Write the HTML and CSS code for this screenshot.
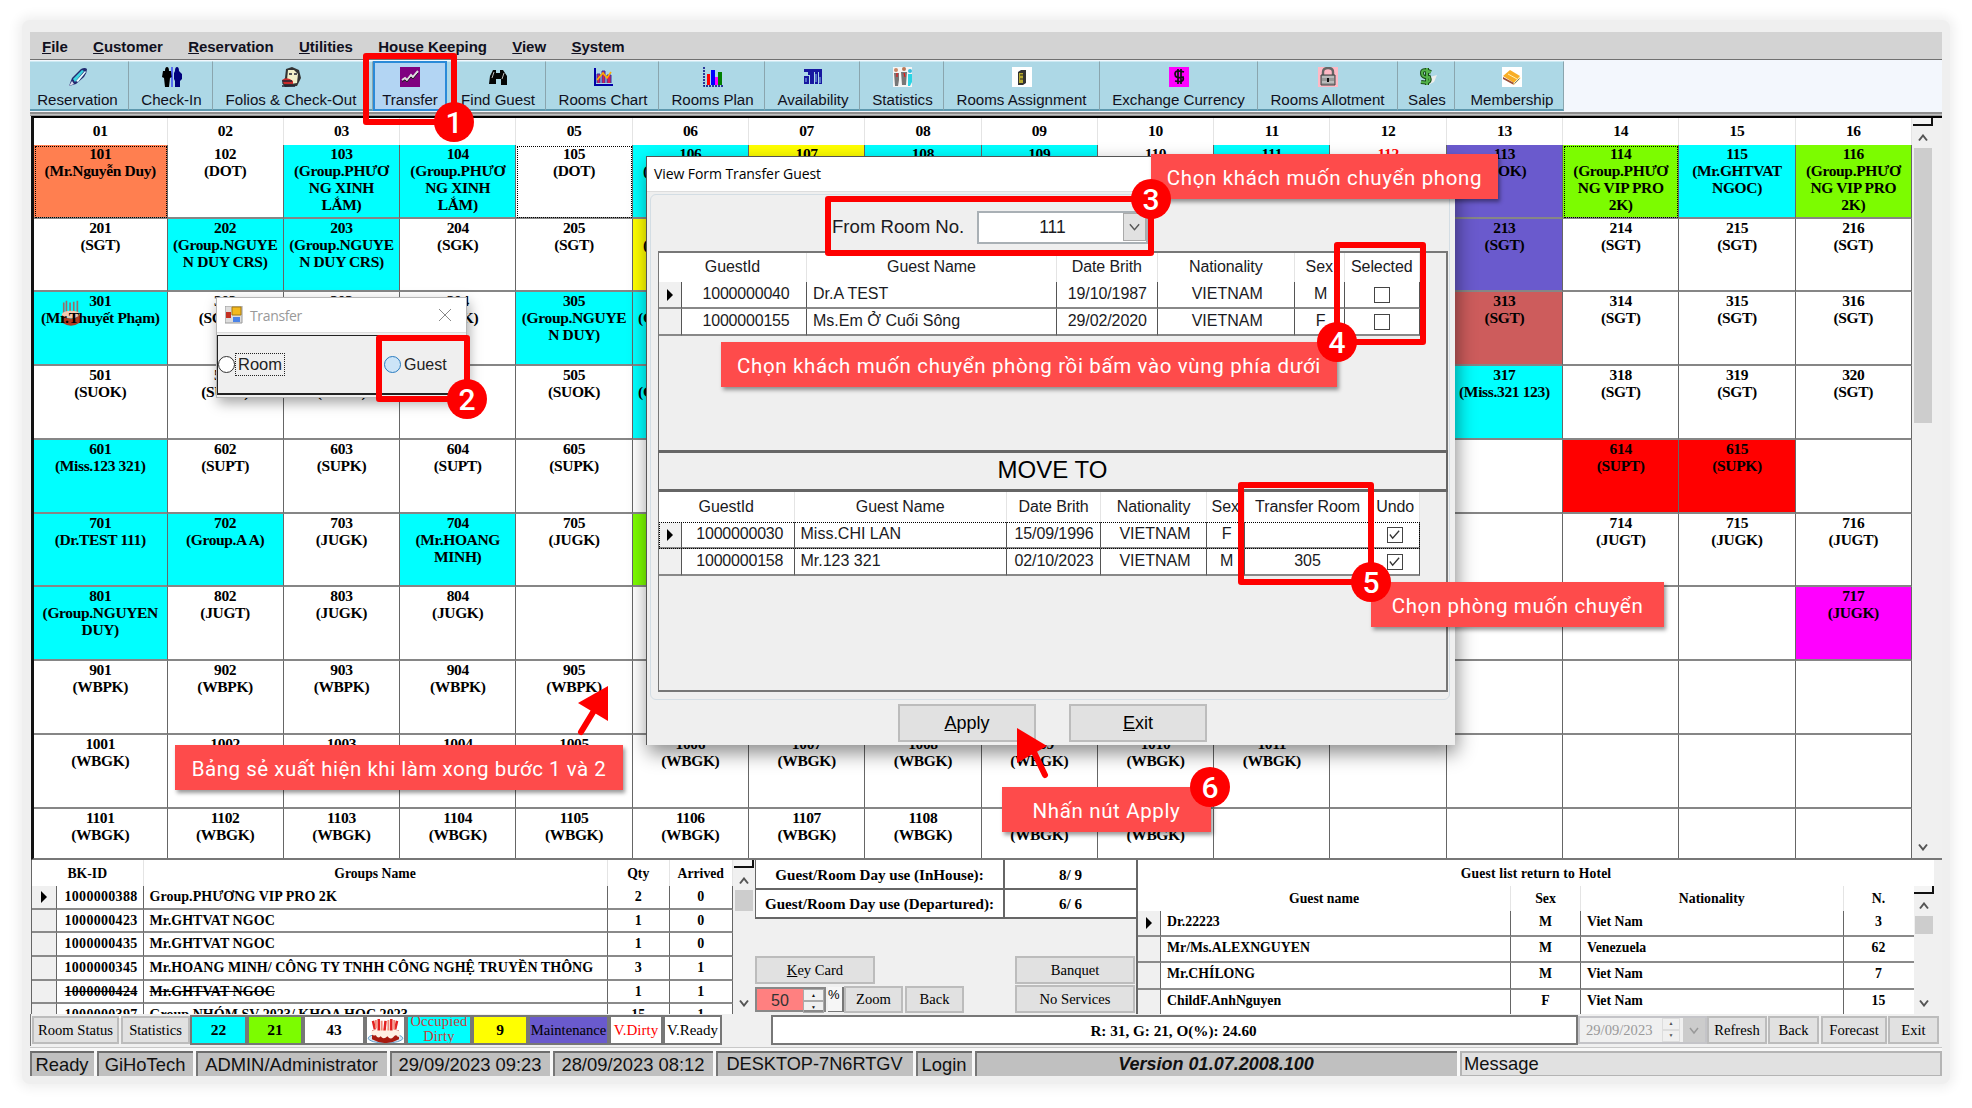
FILE: index.html
```html
<!DOCTYPE html>
<html lang="vi">
<head>
<meta charset="utf-8">
<title>Hotel front desk - Transfer guest</title>
<link rel="stylesheet" href="styles.css">
</head>
<body>
<div class="frame">
<div class="app">
  <nav class="menu"><span><u>F</u>ile</span><span><u>C</u>ustomer</span><span><u>R</u>eservation</span><span><u>U</u>tilities</span><span>House Keeping</span><span><u>V</u>iew</span><span><u>S</u>ystem</span></nav>
  <div class="toolstrip">
    <div class="tool w-res"><svg viewBox="0 0 20 20"><path d="M1 19 4 11 13 2q4-2 6 0 0 4-3 8L8 17Z" fill="#222a70"/><path d="M5 12 14 3l2 1-9 11Z" fill="#3ed3e0"/><path d="M8 14 17 4l1 1-8 10Z" fill="#e8ffff"/><path d="m1 19 3-5 2 3Z" fill="#dde"/></svg><span>Reservation</span></div>
    <div class="tool w-chk"><svg viewBox="0 0 20 20"><path d="M3 4q0-4 2-4t2 4h2l1 6-2 1-1 9H3l-1-9-2-1 1-6Z" fill="#000"/><path d="M10 0v20" stroke="#00f"/><path d="M13 4q0-4 2-4t2 4l3 3v5l-2 2v6h-5v-6l-1-2V6Z" fill="#00007c"/></svg><span>Check-In</span></div>
    <div class="tool w-fol"><svg viewBox="0 0 20 20"><path d="m5 2 6-2 7 3 2 8-4 8-12 1-3-4 3-5Z" fill="#333"/><path d="M7 3h6l4 4-1 9-6 1-4-4Z" fill="#f2efc8"/><path d="M1 13q5-4 11 1v3H3Z" fill="#c82a2a"/><path d="M1 14h10M8 7h3m2 0h3M1 19h13" stroke="#223" stroke-width="1.3"/></svg><span>Folios &amp; Check-Out</span></div>
    <div class="tool w-tra active"><svg viewBox="0 0 20 20"><path d="M0 0h20v20H0Z" fill="#800080"/><path d="m2 13 3-2 2 2 4-5 2 2 5-6" fill="none" stroke="#ddd" stroke-width="2"/><path d="m2 15 3-2 2 2 4-5 2 2 5-6" fill="none" stroke="#222"/></svg><span>Transfer</span></div>
    <div class="tool w-fin"><svg viewBox="0 0 20 20"><path d="M2 9 5 3h3v3h4V3h3l4 6v9h-6v-6H8v5H1Z" fill="#050505"/><path d="m4 11 2-6m8 7 2-6" stroke="#bbb"/></svg><span>Find Guest</span></div>
    <div class="tool w-cha"><svg viewBox="0 0 20 20"><path d="M2 1v17h18" fill="none" stroke="#0000a8" stroke-width="2"/><path d="M4 16V7h3v9m2 0V4h3v12m2 0V8h4v8" fill="#d51e55" stroke="#3333a5"/><path d="m4 13 6-7 4 5 4-6" fill="none" stroke="#ffb000" stroke-width="1.6"/></svg><span>Rooms Chart</span></div>
    <div class="tool w-pla"><svg viewBox="0 0 20 20"><path d="M1 0v19h19" fill="none" stroke="#000080" stroke-width="1.5" stroke-dasharray="2 1"/><path d="M4 7h3v11H4Z" fill="red"/><path d="M8 3h4v15H8Z" fill="#00f"/><path d="M12 10h3v8h-3Z" fill="#f0f"/><path d="M15 5h4v13h-4Z" fill="green"/></svg><span>Rooms Plan</span></div>
    <div class="tool w-ava"><svg viewBox="0 0 20 20"><path d="M1 2h18v3H1ZM1 9h5v8H1ZM7 5h4v12H7ZM12 5h3v12h-3ZM16 5h3v12h-3ZM5 4h3v4H5Z" fill="#1717a0"/><path d="M3 11v4m10-8v8m4-5v6" stroke="#8fc0f0"/></svg><span>Availability</span></div>
    <div class="tool w-sta"><svg viewBox="0 0 20 20"><path d="M0 0h19v20H0Z" fill="#f5f5f5"/><circle cx="3" cy="3" r="2" fill="#c86"/><circle cx="11" cy="2" r="2" fill="#b75"/><circle cx="17" cy="4" r="2" fill="#3bd"/><path d="M1 6h5v7l-1 6H2ZM8 5h6l-1 13H9Z" fill="#777"/><path d="M15 7h4v8l-2 4h-2Z" fill="#29d5e5"/><path d="m11 6 1 4M4 6v4" stroke="red"/></svg><span>Statistics</span></div>
    <div class="tool w-ass"><svg viewBox="0 0 20 20"><path d="M0 0h20v20H0Z" fill="#fff"/><path d="m6 5 3-2h5v13l-3 2H6Z" fill="#333"/><path d="M7 6h4v10H7Z" fill="#b7aa30"/><path d="M8 8h3m-3 4h3" stroke="#222"/></svg><span>Rooms Assignment</span></div>
    <div class="tool w-exc"><svg viewBox="0 0 20 20"><path d="M0 0h20v20H0Z" fill="#f0f"/><path d="M15 5Q6 2 6 7t8 3q2 6-8 4M9 2v15m3-15v15" fill="none" stroke="#111" stroke-width="1.7"/></svg><span>Exchange Currency</span></div>
    <div class="tool w-all"><svg viewBox="0 0 20 20"><path d="M0 0h20v20H0Z" fill="#ffb9c5"/><path d="M5 9V5q0-4 5-4t5 4v4" fill="none" stroke="#666" stroke-width="2.4"/><path d="M3 8h14v10H3Z" fill="#999" stroke="#444"/><path d="M4 10h12M4 15h12" stroke="#ddd"/><path d="M10 11v4" stroke="#111" stroke-width="2"/></svg><span>Rooms Allotment</span></div>
    <div class="tool w-sal"><svg viewBox="0 0 20 20"><path d="m13 10 7-2-3 7-6 3Z" fill="#eee"/><path d="M14 5Q5 1 5 6t7 4q3 7-8 5M10 1v17" fill="none" stroke="#184d18" stroke-width="4"/><path d="M14 5Q5 1 5 6t7 4q3 7-8 5M10 1v17" fill="none" stroke="#54b24a" stroke-width="2"/></svg><span>Sales</span></div>
    <div class="tool w-mem"><svg viewBox="0 0 20 20"><path d="M0 0h20v20H0Z" fill="#fff"/><path d="m1 9 7-6 10 6-6 7Z" fill="#f8ae27"/><path d="m1 10 11 6v2L1 12Z" fill="#994b34"/><path d="m12 16 6-6v2l-6 6ZM6 7l9 5" fill="#778" stroke="#fff2b3"/></svg><span>Membership</span></div>
  </div>
  <div class="split"></div>

  <section class="rooms">
    <div class="room-grid">
      <b>01</b><b>02</b><b>03</b><b>04</b><b>05</b><b>06</b><b>07</b><b>08</b><b>09</b><b>10</b><b>11</b><b>12</b><b>13</b><b>14</b><b>15</b><b>16</b>

      <div class="coral dot">101<br>(Mr.Nguyễn Duy)</div><div>102<br>(DOT)</div><div class="cyan">103<br>(Group.PHƯƠ<br>NG XINH<br>LẮM)</div><div class="cyan">104<br>(Group.PHƯƠ<br>NG XINH<br>LẮM)</div><div class="dot">105<br>(DOT)</div><div class="cyan">106<br>(Group.PHƯƠ</div><div class="yellow">107</div><div class="cyan">108</div><div class="cyan">109</div><div>110</div><div class="cyan">111</div><div class="redtext">112</div><div class="slate">113<br>(DOK)</div><div class="green dot">114<br>(Group.PHƯƠ<br>NG VIP PRO<br>2K)</div><div class="cyan">115<br>(Mr.GHTVAT<br>NGOC)</div><div class="green">116<br>(Group.PHƯƠ<br>NG VIP PRO<br>2K)</div>

      <div>201<br>(SGT)</div><div class="cyan">202<br>(Group.NGUYE<br>N DUY CRS)</div><div class="cyan">203<br>(Group.NGUYE<br>N DUY CRS)</div><div>204<br>(SGK)</div><div>205<br>(SGT)</div><div class="yellow">206<br>(Group.NGUY</div><div></div><div></div><div></div><div></div><div></div><div></div><div class="slate">213<br>(SGT)</div><div>214<br>(SGT)</div><div>215<br>(SGT)</div><div>216<br>(SGT)</div>

      <div class="cyan birthday"><svg viewBox="0 0 22 30"><path d="M3 3v12M6 1v13M10 3v11M14 2v13M18 1v13" stroke="#9a6a68" stroke-width="1.8"/><ellipse cx="11" cy="16" rx="10" ry="4" fill="#f2c8b0"/><path d="M1 17q10 7 20 0v8q-10 7-20 0Z" fill="#b03a20"/></svg>301<br>(Mr.Thuyết Phạm)</div><div>302<br>(SGOK)</div><div>303<br>(SGT)</div><div>304<br>(SGK)</div><div class="cyan">305<br>(Group.NGUYE<br>N DUY)</div><div class="cyan">306<br>(Group.NGUYE</div><div></div><div></div><div></div><div></div><div></div><div></div><div class="indian">313<br>(SGT)</div><div>314<br>(SGT)</div><div>315<br>(SGT)</div><div>316<br>(SGT)</div>

      <div>501<br>(SUOK)</div><div>502<br>(SUPT)</div><div>503<br>(SUPK)</div><div>504</div><div>505<br>(SUOK)</div><div class="cyan">506<br>(Group.NGUYE</div><div></div><div></div><div></div><div></div><div></div><div></div><div class="cyan">317<br>(Miss.321 123)</div><div>318<br>(SGT)</div><div>319<br>(SGT)</div><div>320<br>(SGT)</div>

      <div class="cyan">601<br>(Miss.123 321)</div><div>602<br>(SUPT)</div><div>603<br>(SUPK)</div><div>604<br>(SUPT)</div><div>605<br>(SUPK)</div><div></div><div></div><div></div><div></div><div></div><div></div><div></div><div></div><div class="red">614<br>(SUPT)</div><div class="red">615<br>(SUPK)</div><div></div>

      <div class="cyan">701<br>(Dr.TEST 111)</div><div class="cyan">702<br>(Group.A A)</div><div>703<br>(JUGK)</div><div class="cyan">704<br>(Mr.HOANG<br>MINH)</div><div>705<br>(JUGK)</div><div class="green"></div><div></div><div></div><div></div><div></div><div></div><div></div><div></div><div>714<br>(JUGT)</div><div>715<br>(JUGK)</div><div>716<br>(JUGT)</div>

      <div class="cyan">801<br>(Group.NGUYEN<br>DUY)</div><div>802<br>(JUGT)</div><div>803<br>(JUGK)</div><div>804<br>(JUGK)</div><div></div><div></div><div></div><div></div><div></div><div></div><div></div><div></div><div></div><div></div><div></div><div class="magenta">717<br>(JUGK)</div>

      <div>901<br>(WBPK)</div><div>902<br>(WBPK)</div><div>903<br>(WBPK)</div><div>904<br>(WBPK)</div><div>905<br>(WBPK)</div><div></div><div></div><div></div><div></div><div></div><div></div><div></div><div></div><div></div><div></div><div></div>

      <div>1001<br>(WBGK)</div><div>1002</div><div>1003</div><div>1004</div><div>1005</div><div>1006<br>(WBGK)</div><div>1007<br>(WBGK)</div><div>1008<br>(WBGK)</div><div>1009<br>(WBGK)</div><div>1010<br>(WBGK)</div><div>1011<br>(WBGK)</div><div></div><div></div><div></div><div></div><div></div>

      <div>1101<br>(WBGK)</div><div>1102<br>(WBGK)</div><div>1103<br>(WBGK)</div><div>1104<br>(WBGK)</div><div>1105<br>(WBGK)</div><div>1106<br>(WBGK)</div><div>1107<br>(WBGK)</div><div>1108<br>(WBGK)</div><div>1109<br>(WBGK)</div><div>1110<br>(WBGK)</div><div></div><div></div><div></div><div></div><div></div><div></div>
    </div>
    <div class="scroll main-scroll"><i class="corner"></i><svg viewBox="0 0 10 7"><path d="M1 6 5 1l4 5"/></svg><i class="thumb"></i><svg class="end" viewBox="0 0 10 7"><path d="M1 1l4 5 4-5"/></svg></div>
  </section>

  <section class="lower">
    <div class="groups">
      <div class="grow ghead"><span class="two">BK-ID</span><span>Groups Name</span><span>Qty</span><span>Arrived</span></div>
      <div class="grow"><span class="rh"><i class="ptr"></i></span><span>1000000388</span><span>Group.PHƯƠNG VIP PRO 2K</span><span>2</span><span>0</span></div>
      <div class="grow"><span class="rh"></span><span>1000000423</span><span>Mr.GHTVAT NGOC</span><span>1</span><span>0</span></div>
      <div class="grow"><span class="rh"></span><span>1000000435</span><span>Mr.GHTVAT NGOC</span><span>1</span><span>0</span></div>
      <div class="grow"><span class="rh"></span><span>1000000345</span><span>Mr.HOANG MINH/ CÔNG TY TNHH CÔNG NGHỆ TRUYỀN THÔNG</span><span>3</span><span>1</span></div>
      <div class="grow"><span class="rh"></span><span><s>1000000424</s></span><span><s>Mr.GHTVAT NGOC</s></span><span>1</span><span>1</span></div>
      <div class="grow"><span class="rh"></span><span>1000000397</span><span>Group.NHÓM SV 2023/ KHOA HOC 2023</span><span>15</span><span>1</span></div>
    </div>
    <div class="scroll group-scroll"><i class="corner"></i><svg viewBox="0 0 10 7"><path d="M1 6 5 1l4 5"/></svg><i class="thumb"></i><svg class="end" viewBox="0 0 10 7"><path d="M1 1l4 5 4-5"/></svg></div>
    <div class="middle">
      <div class="dayuse"><b>Guest/Room Day use (InHouse):</b><b>8/ 9</b><b>Guest/Room Day use (Departured):</b><b>6/ 6</b></div>
      <div class="mid-row"><button class="wide"><u>K</u>ey Card</button><button class="wide push">Banquet</button></div>
      <div class="mid-row second"><div class="spin"><span>50</span><i><em>▲</em><em>▼</em></i></div><div class="pct">%</div><button class="small">Zoom</button><button class="small back">Back</button><button class="wide push">No Services</button></div>
    </div>
    <div class="returns">
      <div class="rtitle">Guest list return to Hotel</div>
      <div class="rbody">
        <div class="rtable">
          <div class="rrow rhead"><span class="two">Guest name</span><span>Sex</span><span>Nationality</span><span>N.</span></div>
          <div class="rrow"><span class="rh"><i class="ptr"></i></span><span>Dr.22223</span><span>M</span><span>Viet Nam</span><span>3</span></div>
          <div class="rrow"><span class="rh"></span><span>Mr/Ms.ALEXNGUYEN</span><span>M</span><span>Venezuela</span><span>62</span></div>
          <div class="rrow"><span class="rh"></span><span>Mr.CHÍLONG</span><span>M</span><span>Viet Nam</span><span>7</span></div>
          <div class="rrow"><span class="rh"></span><span>ChildF.AnhNguyen</span><span>F</span><span>Viet Nam</span><span>15</span></div>
        </div>
        <div class="scroll ret-scroll"><i class="corner"></i><svg viewBox="0 0 10 7"><path d="M1 6 5 1l4 5"/></svg><i class="thumb"></i><svg class="end" viewBox="0 0 10 7"><path d="M1 1l4 5 4-5"/></svg></div>
      </div>
    </div>
  </section>

  <section class="legend">
    <button class="b-status">Room Status</button><button class="b-stat">Statistics</button>
    <div class="key cyan k22">22</div><div class="key green k21">21</div><div class="key k43">43</div>
    <div class="key cake"><svg viewBox="0 0 38 28"><ellipse cx="19" cy="22" rx="18" ry="5" fill="#d8e8f5" stroke="#5e9bc8"/><path d="M5 14h28v9q-14 8-28 0Z" fill="#a81a10"/><path d="M4 15q15-7 30 0 1 4-2 6-2-4-5 0-3 3-6-1-4 4-7 0-3 3-5-1-5 1-5-4Z" fill="#fff0e4"/><path d="M6 4l2 9M12 2v12M19 4l-1 10M25 2v12M31 4l-2 9" stroke="#e32020" stroke-width="2.6"/><path d="M9 3v9M15 4v10M22 3v11M28 3v10" stroke="#f08a78" stroke-width="2"/></svg></div>
    <div class="key cyan occ">Occupied<br>Dirty</div><div class="key yellow k9">9</div><div class="key slate mnt">Maintenance</div><div class="key vd">V.Dirty</div><div class="key vr">V.Ready</div>
    <div class="summary">R: 31, G: 21, O(%): 24.60</div>
    <div class="date"><span>29/09/2023</span><i><em>▲</em><em>▼</em></i><svg viewBox="0 0 20 24"><path d="m6 10 4 5 4-5"/></svg></div>
    <button class="b-ref">Refresh</button><button class="b-back">Back</button><button class="b-for">Forecast</button><button class="b-exit">Exit</button>
  </section>

  <footer class="status"><span class="s1">Ready</span><span class="s2">GiHoTech</span><span class="s3">ADMIN/Administrator</span><span class="s4">29/09/2023 09:23</span><span class="s5">28/09/2023 08:12</span><span class="s6">DESKTOP-7N6RTGV</span><span class="s7">Login</span><span class="s8">Version 01.07.2008.100</span><span class="s9">Message</span></footer>
</div>
</div>

<div class="dialog pick">
  <div class="pick-title"><svg viewBox="0 0 18 18"><path d="M0 0h17v17H0Z" fill="#ddd" stroke="#999"/><path d="M1 6h5v6H1Z" fill="#c43022"/><path d="M7 1h9v8H7Z" fill="#f3b91e" stroke="#a87a10"/><path d="M8 11h7v5H8Z" fill="#4b83e8"/></svg><span>Transfer</span><svg class="x" viewBox="0 0 12 12"><path d="M0 0 12 12M12 0 0 12"/></svg></div>
  <div class="pick-body"><label class="o-room"><i></i><span>Room</span></label><label class="o-guest"><i></i><span>Guest</span></label></div>
</div>

<div class="dialog form">
  <div class="form-title">View Form Transfer Guest</div>
  <div class="panel">
    <div class="from"><span>From Room No.</span><div class="combo"><span>111</span><svg viewBox="0 0 22 28"><path d="m6 11 5 6 5-6"/></svg></div></div>
    <div class="tbl from-tbl">
      <div class="frow fhead"><span class="two">GuestId</span><span>Guest Name</span><span>Date Brith</span><span>Nationality</span><span>Sex</span><span>Selected</span></div>
      <div class="frow"><span class="rh"><i class="ptr"></i></span><span>1000000040</span><span>Dr.A TEST</span><span>19/10/1987</span><span>VIETNAM</span><span>M</span><span><i class="box"></i></span></div>
      <div class="frow"><span class="rh"></span><span>1000000155</span><span>Ms.Em Ở Cuối Sông</span><span>29/02/2020</span><span>VIETNAM</span><span>F</span><span><i class="box"></i></span></div>
    </div>
    <div class="moveto">MOVE TO</div>
    <div class="tbl to-tbl">
      <div class="frow fhead"><span class="two">GuestId</span><span>Guest Name</span><span>Date Brith</span><span>Nationality</span><span>Sex</span><span>Transfer Room</span><span>Undo</span></div>
      <div class="frow focus"><span class="rh"><i class="ptr"></i></span><span>1000000030</span><span>Miss.CHI LAN</span><span>15/09/1996</span><span>VIETNAM</span><span>F</span><span></span><span><i class="box"><svg viewBox="0 0 14 14"><path d="m2 7 3 4 7-8"/></svg></i></span></div>
      <div class="frow"><span class="rh"></span><span>1000000158</span><span>Mr.123 321</span><span>02/10/2023</span><span>VIETNAM</span><span>M</span><span>305</span><span><i class="box"><svg viewBox="0 0 14 14"><path d="m2 7 3 4 7-8"/></svg></i></span></div>
    </div>
  </div>
  <div class="form-actions"><button><u>A</u>pply</button><button><u>E</u>xit</button></div>
</div>

<div class="mark m1"></div><div class="mark m2"></div><div class="mark m3"></div>
<div class="note n3">Chọn khách muốn chuyển phong</div>
<div class="note n4">Chọn khách muốn chuyển phòng rồi bấm vào vùng phía dưới</div>
<div class="mark m4"></div><div class="mark m5"></div>
<div class="note n5">Chọn phòng muốn chuyển</div>
<div class="note n1">Bảng sẻ xuất hiện khi làm xong bước 1 và 2</div>
<div class="note n6">Nhấn nút Apply</div>
<svg class="arrow a1" viewBox="0 0 40 54"><path d="M32 1v35L2 18Z"/><path class="tail" d="M19 24 5 47"/></svg>
<svg class="arrow a6" viewBox="0 0 40 54"><path d="M1 1v35l30-17Z"/><path class="tail" d="m17 23 12 25"/></svg>
<div class="badge g1">1</div><div class="badge g2">2</div><div class="badge g3">3</div><div class="badge g4">4</div><div class="badge g5">5</div><div class="badge g6">6</div>
</body>
</html>
```
FILE: styles.css
```css
* { box-sizing: border-box; }
body { margin: 0; width: 1972px; height: 1108px; overflow: hidden; position: relative; background: #fff; color: #000; font-family: "Liberation Serif", serif; }
i, em { font-style: normal; }
button { font: 14.6px "Liberation Serif", serif; color: #000; background: #e1e1e1; border: 2px solid #bcbcbc; padding: 0; white-space: nowrap; }

.frame { margin: 0 auto; width: 1932px; height: 1090px; padding: 32px 10px 0; position: relative; }
.frame::before { content: ""; position: absolute; inset: 20px 2px 6px 2px; border-radius: 8px; background: #efefef; box-shadow: 0 0 12px 4px #efefef; }
.app { position: relative; width: 1912px; height: 1044px; background: #f0f0f0; display: flex; flex-direction: column; overflow: hidden; }

/* menu and tool strip */
.menu { height: 28px; flex: none; background: #d3d3d3; border-bottom: 1px solid #707070; display: flex; align-items: center; gap: 25.4px; padding: 1px 12px 0; font: bold 15px "Liberation Sans", sans-serif; letter-spacing: -.04px; color: #101020; }
.toolstrip { height: 52px; flex: none; background: #f3f7fd; display: flex; padding: 1px 0; }
.tool { height: 50px; background: #add8e6; border-top: 1px solid #cdeaf3; border-right: 1px solid #8aa5ae; border-bottom: 2px solid #5d98ae; display: flex; flex-direction: column; align-items: center; padding: 5px 0 0 2px; font: 15.1px/20px "Liberation Sans", sans-serif; color: #101020; white-space: nowrap; }
.tool svg { width: 20px; height: 20px; margin-bottom: 3px; flex: none; }
.tool.active { background: #b3d5f3; border: 2px solid #2a8ad8; padding: 4px 0 0; }
.w-res { width: 99px; } .w-chk { width: 84px; } .w-fol { width: 160px; } .w-tra { width: 74px; } .w-fin { width: 99px; }
.w-cha { width: 113px; } .w-pla { width: 106px; } .w-ava { width: 95px; } .w-sta { width: 84px; } .w-ass { width: 156px; }
.w-exc { width: 158px; } .w-all { width: 140px; } .w-sal { width: 57px; } .w-mem { width: 109px; }
.w-res, .w-fol { padding: 5px 3px 0 0; }
.w-fin { padding-left: 4px; }
.w-mem { padding-left: 6px; }
.w-ass, .w-exc, .w-all { padding-left: 0; }
.split { height: 4px; flex: none; background: #c0c0c0; border-top: 2px solid #8d8d8d; border-bottom: 1px solid #999; }

/* room grid */
.rooms { height: 744px; flex: none; display: flex; border-left: 3px solid #111; border-top: 2px solid #000; margin-left: 1px; border-bottom: 2px solid #777; overflow: hidden; }
.room-grid { width: 1878px; display: grid; grid-template-columns: 133.5px repeat(15, 116.3px); grid-template-rows: 26.8px repeat(10, 73.75px); background: #fff; font-weight: bold; font-size: 15.5px; line-height: 17.1px; letter-spacing: -.35px; text-align: center; white-space: nowrap; }
.room-grid > b { line-height: 26px; border-right: 1px solid #e4e4e4; }
.room-grid > div { border-right: 1px solid #666; border-bottom: 2px solid #868686; overflow: hidden; background: #fff; position: relative; }
.room-grid .dot { outline: 1px dotted #000; outline-offset: -2px; }
.room-grid > .cyan, .key.cyan { background: #0ff; }
.room-grid > .coral { background: #ff7f50; }
.room-grid > .yellow, .key.yellow { background: #ff0; }
.room-grid > .slate, .key.slate { background: #6a5acd; }
.room-grid > .green, .key.green { background: #7cfc00; }
.room-grid > .indian { background: #cd5c5c; }
.room-grid > .red { background: #f00; }
.room-grid > .magenta { background: #f0f; }
.redtext { color: #f00; }
.birthday svg { position: absolute; left: 27px; top: 7px; width: 20px; height: 29px; z-index: -1; }
.birthday { isolation: isolate; }

/* scroll bars */
.scroll { width: 21px; background: #f0f0f0; display: flex; flex-direction: column; align-items: center; flex: none; }
.scroll svg { width: 10px; height: 8px; fill: none; stroke: #555; stroke-width: 2; flex: none; }
.scroll .end { margin-top: auto; }
.scroll .thumb { width: 18px; background: #cdcdcd; }
.corner { width: 20px; height: 8px; border-right: 2px solid #111; border-bottom: 2px solid #111; background: #f4f4f4; flex: none; }
.main-scroll .corner { margin-bottom: 8px; }
.main-scroll .thumb { height: 275px; margin-top: 6px; }
.main-scroll .end { margin-bottom: 7px; }

/* lower panels */
.lower { height: 154px; flex: none; display: flex; font-weight: bold; font-size: 14px; white-space: nowrap; overflow: hidden; }
.groups { width: 702px; flex: none; margin-left: 1px; border-left: 1px solid #666; overflow: hidden; background: #fff; }
.grow { display: grid; grid-template-columns: 24.5px 87px 464px 62.5px 62.5px; height: 23.7px; line-height: 21px; }
.grow span { border-right: 1px solid #666; border-bottom: 2px solid #8a8a8a; text-align: center; overflow: hidden; }
.grow span:nth-child(2) { letter-spacing: .3px; padding-left: 3px; }
.grow span:nth-child(3) { text-align: left; padding-left: 6px; letter-spacing: .04px; }
.two { grid-column: span 2; }
.ghead { height: 26px; line-height: 28px; font-size: 13.7px; }
.grow.ghead span { border-bottom: 0; border-color: #e4e4e4; text-align: center; padding: 0; letter-spacing: 0; }
.rh { background: #f0f0f0; display: flex; align-items: center; justify-content: center; }
.ptr { border-left: 6px solid #000; border-top: 6px solid transparent; border-bottom: 6px solid transparent; }
.group-scroll .corner { margin-bottom: 9px; }
.group-scroll .thumb { height: 21px; margin-top: 5px; }
.group-scroll .end { margin-bottom: 7px; }
.middle { width: 382px; flex: none; margin-left: 1px; }
.dayuse { display: grid; grid-template-columns: 249px 133px; grid-template-rows: 30px 29px; font-size: 15.1px; background: #fff; border-left: 1px solid #666; }
.dayuse b { border-right: 2px solid #666; border-bottom: 2px solid #666; display: flex; align-items: center; justify-content: center; padding-top: 2px; }
.mid-row { display: flex; margin-top: 37px; height: 28px; }
.mid-row.second { margin-top: 1px; padding-top: 1px; }
.wide { width: 120px; }
.push { margin-left: auto; margin-right: 2px; }
.mid-row.second .wide { margin-top: -1px; }
.spin { width: 71px; height: 25px; border: 2px solid #888; background: #ff8080; display: flex; font: 16px/23px "Liberation Sans", sans-serif; color: #333; margin-top: 1px; }
.spin span { flex: 1; text-align: center; }
.spin i, .date i { width: 21px; display: flex; flex-direction: column; background: #f0f0f0; font-size: 5px; line-height: 10px; }
.spin i { color: #111; }
.spin em, .date em { flex: 1; text-align: center; border: 1px solid #aaa; }
.pct { width: 16px; height: 25px; margin: 1px 0 0 2px; border-right: 2px solid #777; border-bottom: 1px solid #777; background: #f6f6f6; font: 13px "Liberation Sans", sans-serif; }
.small { width: 59px; }
.back { margin-left: 2px; }
.returns { width: 798px; flex: none; border-left: 2px solid #666; background: #fff; margin-left: -1px; }
.rtitle { height: 26px; line-height: 28px; text-align: center; font-size: 13.6px; letter-spacing: .2px; }
.rbody { display: flex; height: 128px; }
.rtable { width: 777px; overflow: hidden; }
.rrow { display: grid; grid-template-columns: 23px 350px 70px 262.5px 71px; height: 26.2px; line-height: 22px; font-size: 13.8px; }
.rrow span { border-right: 1px solid #666; border-bottom: 2px solid #8a8a8a; text-align: center; }
.rrow span:nth-child(2), .rrow span:nth-child(4) { text-align: left; padding-left: 6px; }
.rhead { height: 25px; line-height: 26px; }
.rrow.rhead span { border-bottom: 0; border-color: #e4e4e4; text-align: center; padding: 0; }
.ret-scroll { width: 20px; }
.ret-scroll .corner { margin-bottom: 8px; }
.ret-scroll .thumb { height: 18px; margin-top: 6px; }
.ret-scroll .end { margin-bottom: 7px; }

/* legend bar */
.legend { height: 32px; flex: none; display: flex; align-items: flex-start; padding: 1px 0 0 1px; border-left: 1px solid #777; font-size: 15px; }
.legend button { height: 28px; margin-top: 1px; flex: none; }
.b-status { width: 87px; } .legend .b-stat { width: 69px; margin-left: 2px; }
.key { height: 30px; flex: none; border: 2px solid #777; background: #fff; display: flex; align-items: center; justify-content: center; font-size: 15.5px; white-space: nowrap; overflow: hidden; }
.k22 { width: 57px; font-weight: bold; } .k21 { width: 56px; font-weight: bold; } .k43 { width: 62px; font-weight: bold; }
.cake { width: 41px; } .cake svg { width: 37px; height: 27px; }
.occ { width: 66px; font-size: 14.5px; line-height: 15px; padding-bottom: 2px; color: #c83c3c; text-align: center; letter-spacing: .2px; }
.k9 { width: 56px; font-weight: bold; } .mnt { width: 81px; font-size: 14.6px; } .vd { width: 54px; color: #f00; font-size: 15px; } .vr { width: 59px; font-size: 15px; }
.summary { width: 807px; flex: none; height: 30px; margin-left: 49px; border: 2px solid #777; background: #fff; text-align: center; font-weight: bold; font-size: 15.2px; line-height: 28px; padding-right: 2px; }
.date { width: 129px; flex: none; height: 28px; margin-top: 1px; border: 2px solid #c4c4c8; display: flex; color: #999; font-size: 14.6px; line-height: 24px; padding-left: 6px; }
.date span { width: 76px; }
.date i { width: 18px; color: #555; }
.date em { border-color: #ddd; }
.date svg { width: 22px; height: 24px; background: #ccc; margin-left: 3px; fill: none; stroke: #999; stroke-width: 1.5; }
.b-ref { width: 60px; } .b-back { width: 51px; margin-left: 1px; } .b-for { width: 66px; margin-left: 2px; } .b-exit { width: 51px; margin-left: 1px; }

/* status bar */
.status { flex: 1; display: flex; gap: 3px; padding-top: 3px; border-top: 1px solid #c8c8c8; margin-top: 1px; background: #f8f8f8; font: 18.4px/25px "Liberation Sans", sans-serif; white-space: nowrap; color: #111; }
.status span { background: #c0c0c0; border-top: 2px solid #6c6c6c; border-left: 2px solid #777; text-align: center; height: 26px; line-height: 23px; padding-right: 2px; flex: none; }
.s1 { width: 64px; } .s2 { width: 96px; } .s3 { width: 191px; } .s4 { width: 160px; } .s5 { width: 160px; } .s6 { width: 197px; font-size: 18.2px; } .s7 { width: 56px; }
.s8 { width: 482px; font: italic bold 18px "Liberation Sans", sans-serif; }
.status .s9 { flex: 1; text-align: left; padding-left: 2px; background: #e1e1e1; border: 2px solid #b4b4b4; line-height: 22px; }

/* dialogs */
.dialog { position: absolute; background: #efefef; font-family: "Liberation Sans", sans-serif; white-space: nowrap; }
.pick { left: 216px; top: 297px; width: 251px; height: 101px; border: 1px solid #b5b5b5; box-shadow: 2px 5px 12px rgba(0,0,0,.35); }
.pick-title { height: 35px; background: #fff; border-bottom: 1px solid #ddd; display: flex; align-items: center; padding: 0 15px 0 8px; font: 14px "Open Sans", sans-serif; color: #999; letter-spacing: -.35px; }
.pick-title svg { width: 18px; height: 18px; margin-right: 7px; }
.pick-title .x { width: 12px; height: 12px; margin: 0 0 0 auto; stroke: #888; overflow: visible; }
.pick-body { margin-top: 2px; height: 60px; border: 1px solid #222; border-right: 0; border-bottom-width: 2px; display: flex; align-items: center; font-size: 17px; color: #222; }
.pick-body label { display: flex; align-items: center; }
.pick-body label > i { width: 17px; height: 17px; border-radius: 50%; border: 1.5px solid #333; background: #fff; }
.o-room { width: 166px; }
.o-room span { outline: 1px dotted #222; padding: 1px 2px; margin-left: 1px; font-size: 16.5px; }
.pick-body .o-guest i { background: #cce4f7; border-color: #2a7cc0; margin-right: 3px; }
.o-guest span { font-size: 16px; }

.form { left: 646px; top: 156px; width: 809px; height: 589px; border-left: 1px solid #555; border-top: 1px solid #555; box-shadow: 2px 8px 18px rgba(0,0,0,.45); font-size: 16px; color: #1a1a22; }
.form-title { height: 35px; background: #fff; border-bottom: 1px solid #ddd; padding-left: 7px; font: 14px/34px "Open Sans", sans-serif; letter-spacing: -.08px; color: #000; }
.panel { margin: 2px 5px 0 3px; height: 506px; border: 1px solid #d3dde4; border-radius: 6px; padding: 0 1px 0 7px; }
.from { height: 56px; display: flex; align-items: center; padding: 8px 0 0 174px; font-size: 18.6px; }
.from > span { width: 145px; }
.combo { width: 171px; height: 33px; border: 2px solid #a9b0b5; background: #fff; display: flex; align-items: center; font-size: 17.5px; }
.combo span { flex: 1; text-align: center; padding-left: 3px; }
.combo svg { width: 23px; height: 28px; background: #e1e1e1; border: 1px solid #aaa; fill: none; stroke: #555; stroke-width: 1.5; }
.tbl { width: 790px; border: 2px solid #777; border-left-width: 1px; }
.from-tbl { height: 199px; border-bottom: 0; }
.to-tbl { height: 200px; border-top: 0; }
.frow { display: grid; width: 761px; background: #fff; height: 27.2px; line-height: 23px; }
.from-tbl .frow { grid-template-columns: 23px 125px 250px 100.5px 137.5px 49.5px 75.5px; }
.to-tbl .frow { grid-template-columns: 23px 112.5px 212.5px 94px 106px 37.5px 127px 48.5px; }
.frow span { border-right: 1px solid #555; border-bottom: 2px solid #888; text-align: center; }
.frow span:nth-child(2) { padding-left: 4px; letter-spacing: -.2px; }
.frow span:nth-child(3) { text-align: left; padding-left: 6px; }
.frow .rh { display: flex; }
.frow span:nth-child(4) { letter-spacing: -.1px; padding-left: 1px; }
.frow span:nth-child(5) { padding-left: 3px; }
.frow span:nth-child(6) { padding-left: 3px; }
.frow.fhead { height: 29px; line-height: 28px; }
.to-tbl .frow.fhead { height: 30px; line-height: 30px; }
.frow.fhead span { border-bottom: 0; border-color: #e4e4e4; text-align: center; padding: 0; letter-spacing: -.1px; }
.focus { outline: 1px dotted #000; outline-offset: -1px; }
.box { display: inline-block; width: 16px; height: 16px; border: 1.5px solid #444; background: #fff; vertical-align: -4px; }
.box svg { display: block; width: 13px; height: 13px; fill: none; stroke: #333; stroke-width: 1.4; }
.moveto { width: 790px; height: 42px; border: 3px solid #666; border-left-width: 1px; border-right-width: 2px; font-size: 24px; line-height: 34px; text-align: center; color: #000; }
.form-actions { display: flex; gap: 33px; padding: 4px 0 0 251px; }
.form-actions button { width: 138px; height: 38px; font: 18px "Liberation Sans", sans-serif; }

/* walkthrough overlay */
.mark { position: absolute; border: 6px solid #fe0000; border-radius: 3px; }
.m1 { left: 363px; top: 53px; width: 94px; height: 72px; }
.m2 { left: 376px; top: 335px; width: 94px; height: 67px; }
.m3 { left: 825px; top: 196px; width: 329px; height: 60px; }
.m4 { left: 1334px; top: 242px; width: 92px; height: 103px; }
.m5 { left: 1238px; top: 482px; width: 136px; height: 103px; }
.badge { position: absolute; width: 40px; height: 40px; border-radius: 50%; background: #fe0000; color: #fff; font: 500 30px/41px Roboto, sans-serif; text-align: center; }
.g1 { left: 434px; top: 102px; } .g2 { left: 447px; top: 379px; } .g3 { left: 1131px; top: 179px; }
.g4 { left: 1317px; top: 322px; } .g5 { left: 1351px; top: 562px; } .g6 { left: 1190px; top: 767px; }
.note { position: absolute; height: 45px; background: #fe4b4b; color: #fff; font: 20.5px/48px Roboto, sans-serif; letter-spacing: .64px; text-align: center; white-space: nowrap; box-shadow: 2px 3px 4px rgba(0,0,0,.4); }
.n1 { left: 175px; top: 745px; width: 448px; letter-spacing: .52px; } .n3 { left: 1151px; top: 154px; width: 347px; } .n4 { left: 721px; top: 342px; width: 616px; }
.n5 { left: 1371px; top: 582px; width: 293px; } .n6 { left: 1002px; top: 787px; width: 209px; }
.arrow { position: absolute; width: 40px; height: 54px; fill: #fe0000; }
.arrow .tail { fill: none; stroke: #fe0000; stroke-width: 6; stroke-linecap: round; }
.a1 { left: 576px; top: 685px; } .a6 { left: 1016px; top: 727px; }
```
